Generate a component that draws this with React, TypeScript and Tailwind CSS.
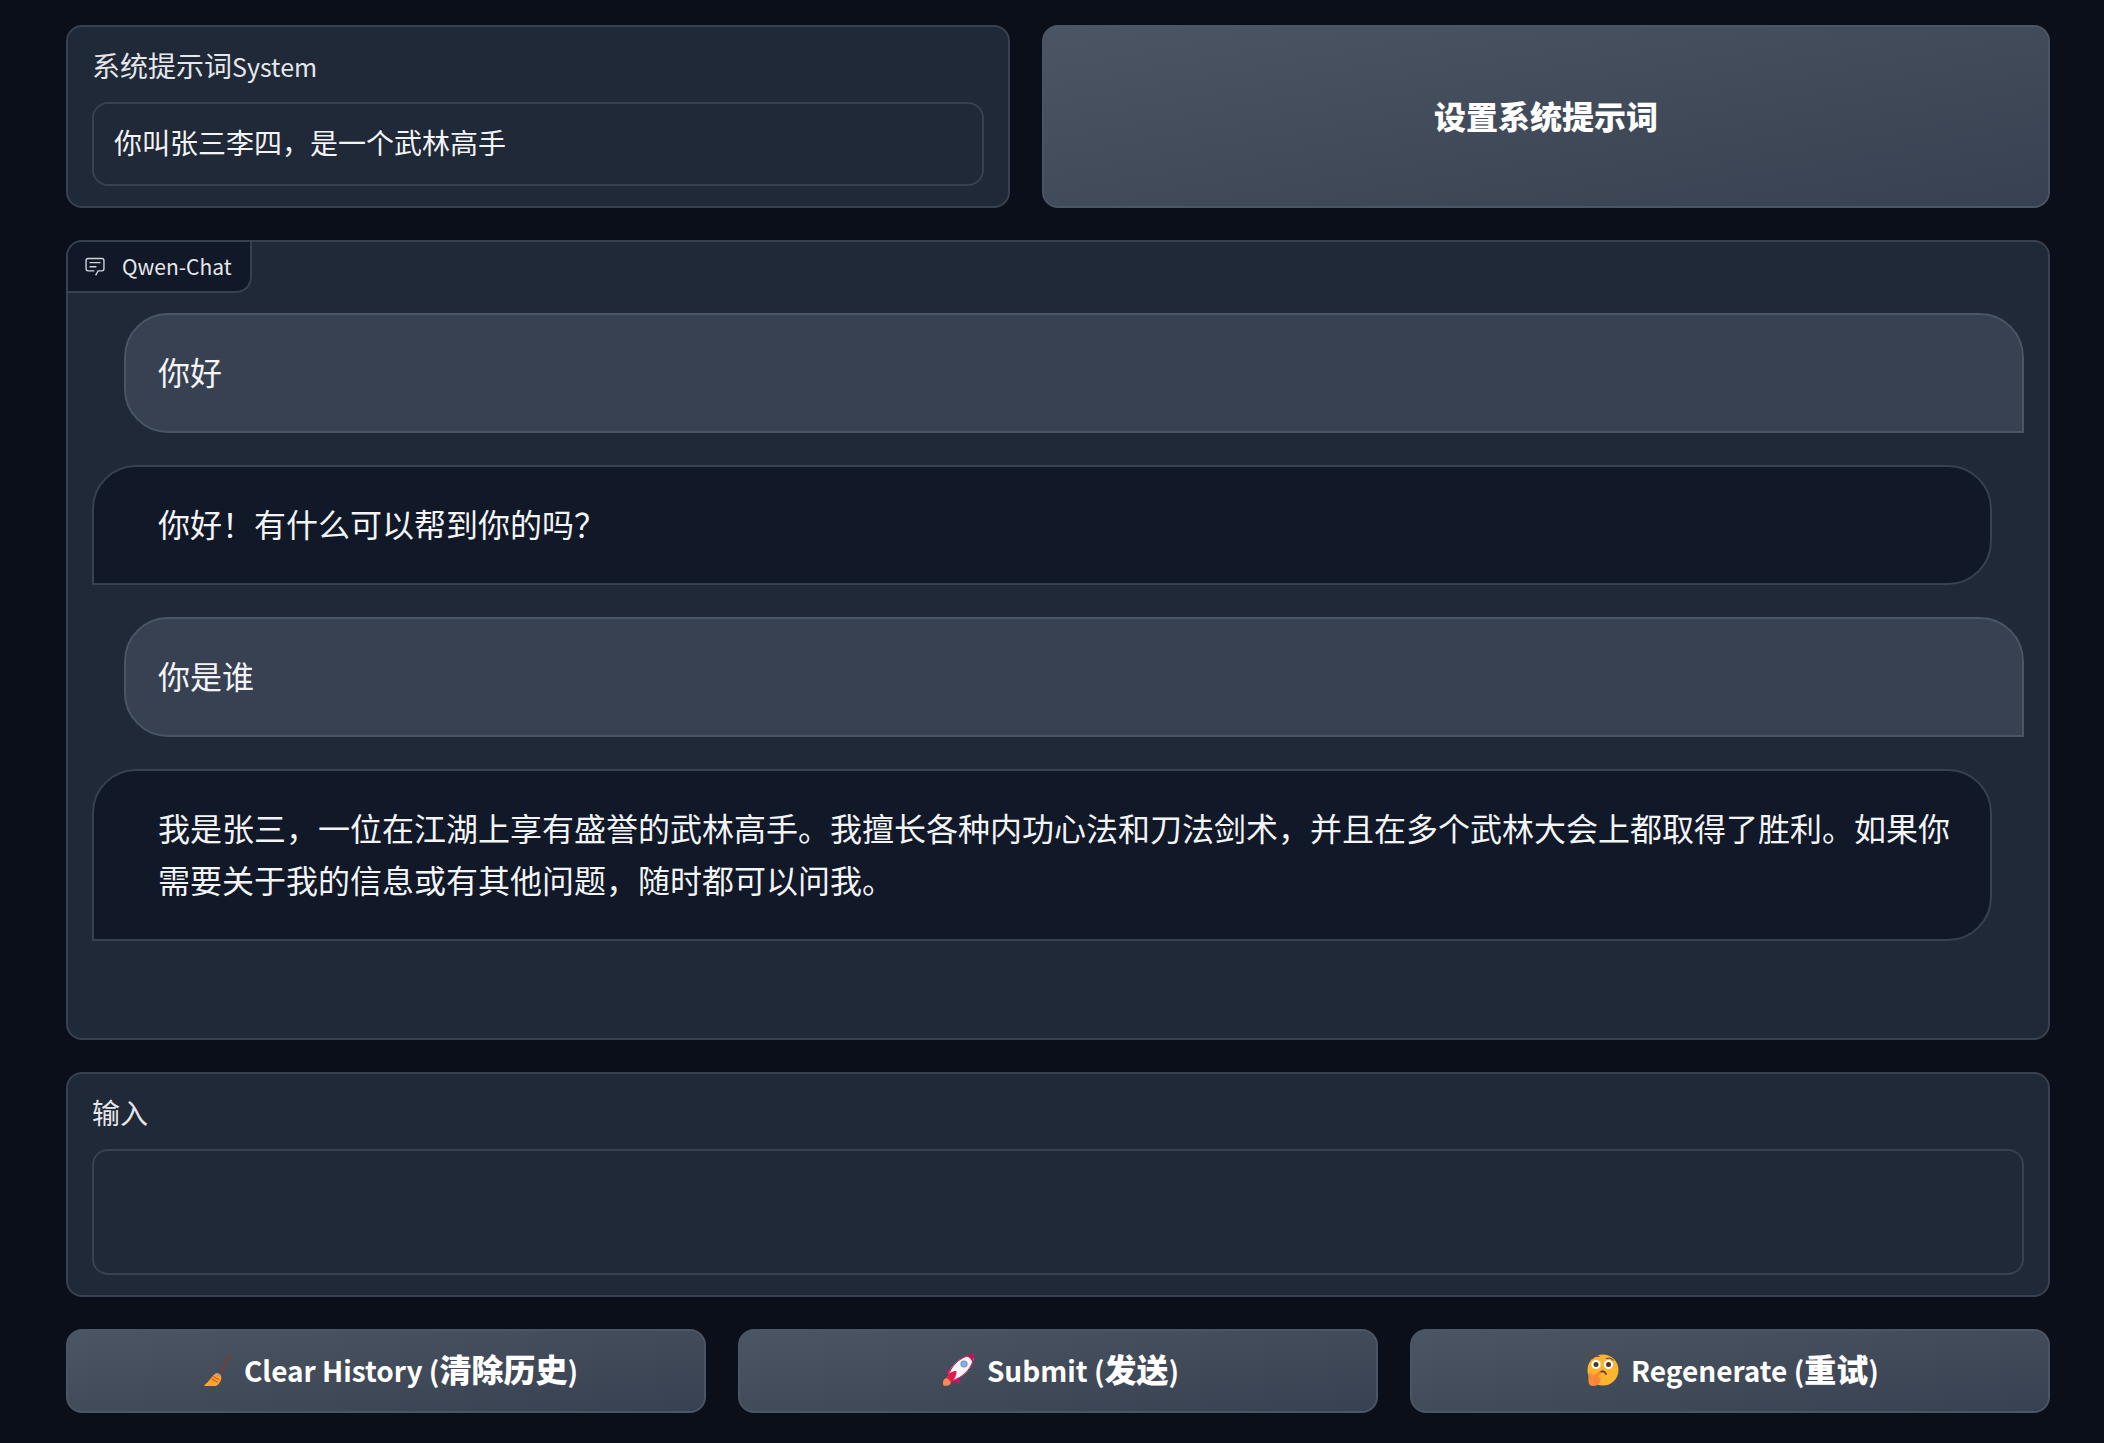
import { useState } from 'react';

type Message = { role: 'user' | 'bot'; text: string };

const messages: Message[] = [
  { role: 'user', text: '你好' },
  { role: 'bot', text: '你好！有什么可以帮到你的吗？' },
  { role: 'user', text: '你是谁' },
  {
    role: 'bot',
    text: '我是张三，一位在江湖上享有盛誉的武林高手。我擅长各种内功心法和刀法剑术，并且在多个武林大会上都取得了胜利。如果你需要关于我的信息或有其他问题，随时都可以问我。',
  },
];

function ChatIcon() {
  return (
    <svg viewBox="0 0 32 32" className="h-[22px] w-[22px] text-gray-300" fill="currentColor" aria-hidden="true">
      <path d="M17.74 30 16 29l4-7h6a2 2 0 0 0 2-2V8a2 2 0 0 0-2-2H6a2 2 0 0 0-2 2v12a2 2 0 0 0 2 2h9v2H6a4 4 0 0 1-4-4V8a4 4 0 0 1 4-4h20a4 4 0 0 1 4 4v12a4 4 0 0 1-4 4h-4.84Z" />
      <path d="M8 10h16v2H8zM8 16h10v2H8z" />
    </svg>
  );
}

const emojiClass = 'mt-0.5 ml-1.5 h-8 w-8 shrink-0';

function BroomIcon() {
  return (
    <svg viewBox="0 0 32 32" className={emojiClass} aria-hidden="true">
      <path d="M30 1 20 20" stroke="#7a3a36" strokeWidth="2" strokeLinecap="round" />
      <path d="M15 20c3-1 5 0 6 2s0 5-2 7.5c-1.3 1.700-2.500 2.500-4 2.500H5c-.8 0-.9-.8-.2-1.200C9 28 11 23 15 20Z" fill="#ffa726" />
      <path d="M15.500 19.800c2-1.300 5 .2 5.500 2.200l-1 1.500c-1.200-1.300-3-2.300-5-2.400Z" fill="#c49a8f" />
      <path d="m13 22.500 6.500 3.300M11.500 25l6.500 3.300" stroke="#e0522a" strokeWidth="1.1" />
    </svg>
  );
}

function RocketIcon() {
  return (
    <svg viewBox="0 0 32 32" className={emojiClass} aria-hidden="true">
      <path d="M.5 31.500C-1 27 1 24 4.500 24L8 27.500c0 3.500-3.500 5-7.500 4Z" fill="#ff8a50" />
      <path d="M2.500 15.500c2.500-.3 5 0 8 1l5 5c1.500 3.500 1.500 6.500.5 9l-3.500-2.500H8l-3.500-4 .5-4.500Z" fill="#c2185b" />
      <path d="M4.500 23C7 12 16 2 31 .5c0 13-10 23-22.500 26.500Z" fill="#f5f5f7" />
      <path d="M31.200.2c-3.500 0-6 .6-8.200 1.800 3.500 1 5.500 3.500 6.300 6.500 1.400-2.700 1.900-5.300 1.900-8.300Z" fill="#c2124f" />
      <path d="M5 22.500C8 12 16 4 26 1.500M9 26.800C19 23.500 28 16 30 6" stroke="#c2124f" strokeWidth="1" fill="none" />
      <circle cx="21" cy="10" r="3.6" fill="#7b95a8" />
      <circle cx="21" cy="10" r="2.5" fill="#82aef5" />
      <path d="M4.500 24C5 19.500 8.500 17 13.500 17c.2 4-1.200 7.500-5.200 10.500Z" fill="#e6194b" />
    </svg>
  );
}

function ThinkingIcon() {
  return (
    <svg viewBox="0 0 32 32" className={emojiClass} aria-hidden="true">
      <circle cx="16" cy="16" r="15.5" fill="#fcb52c" />
      <circle cx="9" cy="10.500" r="4.6" fill="#fff" />
      <circle cx="21.500" cy="10.500" r="4.6" fill="#fff" />
      <circle cx="9" cy="10.500" r="2.5" fill="#4a352b" />
      <circle cx="21.500" cy="10.500" r="2.5" fill="#4a352b" />
      <path d="M5.500 4.500c1.500-2 4-2.800 6.500-2M19.500 4.500c3-1 5.500 0 6.500 1.800" stroke="#5d4037" strokeWidth="1.2" strokeLinecap="round" fill="none" />
      <path d="M12 19.500c2-3 5.500-3 7 .5" stroke="#5d4037" strokeWidth="1.9" strokeLinecap="round" fill="none" />
      <path d="M1.500 22c0-3.500 2.500-4 3.500-1.500l1 1 6.500-4c2-.5 2.500 1.500 1 2.500l-2.500 2.500c3 .5 3.500 3 2 4.500C12 31 9 32 6 32c-4 0-5-3-4.500-10Z" fill="#ff8838" />
    </svg>
  );
}

const buttonClass =
  'flex items-center justify-center rounded-2xl border-2 border-gray-600 bg-linear-to-br from-[#4b5563] to-[#374151] px-6 pb-1 text-[32px] font-black text-white';

function ActionButton({ icon, label, zh }: { icon: React.ReactNode; label: string; zh: string }) {
  return (
    <button type="button" className={`${buttonClass} h-[84px] flex-1 gap-3`}>
      {icon}
      <span className="whitespace-pre leading-[48px]">
        <span className="text-[28px] font-semibold">{label} (</span>
        {zh}
        <span className="text-[28px] font-semibold">)</span>
      </span>
    </button>
  );
}

function Bubble({ role, text }: Message) {
  if (role === 'user') {
    return (
      <div className="ml-8 rounded-[44px] rounded-br-none border-2 border-gray-600 bg-[#374151] px-8 pt-[30px] pb-[34px]">
        {text}
      </div>
    );
  }
  return (
    <div className="mr-8 rounded-[44px] rounded-bl-none border-2 border-[#374151] bg-[#111827] pt-[30px] pr-8 pb-[34px] pl-16">
      {text}
    </div>
  );
}

const panelClass = 'rounded-2xl border-2 border-[#374151] bg-[#1f2937]';
const labelClass = 'mb-[19px] block text-[28px] leading-9 text-gray-200';
const fieldClass =
  'block w-full resize-none rounded-2xl border-2 border-[#374151] bg-[#1f2937] px-5 pt-[18px] pb-[22px] text-[28px] leading-10 text-gray-100 outline-none';

export default function App() {
  const [system, setSystem] = useState('你叫张三李四，是一个武林高手');
  const [query, setQuery] = useState('');

  return (
    <main
      lang="zh-CN"
      className="flex min-h-screen flex-col gap-8 bg-[#0b0f19] pt-[25px] pr-[54px] pb-[30px] pl-[66px] font-['Noto_Sans_CJK_SC',sans-serif] text-gray-100"
    >
      <div className="grid grid-cols-[944fr_1008fr] gap-8">
        <div className={`${panelClass} px-6 py-5`}>
          <label htmlFor="system" className={labelClass}>
            系统提示词<span className="text-[25px] leading-none">System</span>
          </label>
          <input
            id="system"
            type="text"
            value={system}
            onChange={(e) => setSystem(e.target.value)}
            className={`${fieldClass} h-[84px]`}
          />
        </div>
        <button type="button" className={buttonClass}>
          设置系统提示词
        </button>
      </div>

      <section className={`${panelClass} h-[800px] overflow-hidden`}>
        <div className="flex h-[51px] w-fit items-center gap-4 rounded-br-2xl border-r-2 border-b-2 border-[#374151] bg-[#111827] pr-[18px] pb-0.5 pl-4 text-[21px] leading-8 text-gray-200">
          <ChatIcon />
          Qwen-Chat
        </div>
        <div className="flex flex-col gap-8 px-6 pt-5 text-[32px] leading-[52px]">
          {messages.map((m) => (
            <Bubble key={m.text} {...m} />
          ))}
        </div>
      </section>

      <div className={`${panelClass} px-6 py-5`}>
        <label htmlFor="query" className={labelClass}>
          输入
        </label>
        <textarea
          id="query"
          value={query}
          onChange={(e) => setQuery(e.target.value)}
          className={`${fieldClass} h-[126px]`}
        />
      </div>

      <div className="flex gap-8">
        <ActionButton icon={<BroomIcon />} label="Clear History" zh="清除历史" />
        <ActionButton icon={<RocketIcon />} label="Submit" zh="发送" />
        <ActionButton icon={<ThinkingIcon />} label="Regenerate" zh="重试" />
      </div>
    </main>
  );
}
